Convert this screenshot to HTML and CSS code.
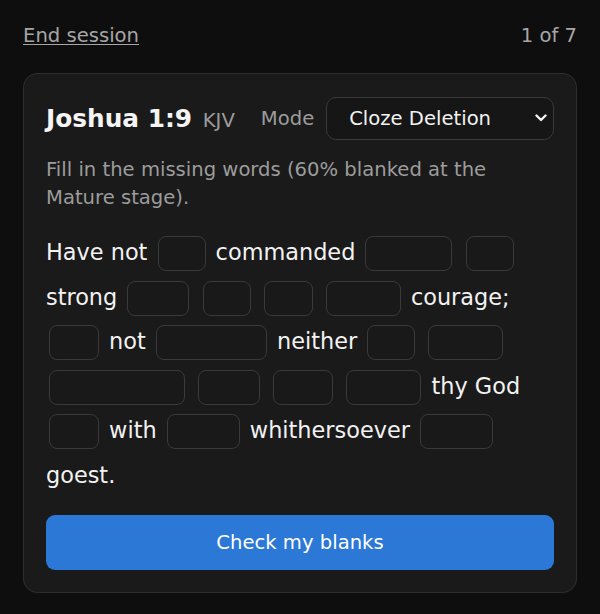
FILE: index.html
```html
<!DOCTYPE html>
<html lang="en">
<head>
<meta charset="utf-8">
<title>Cloze review</title>
<link rel="stylesheet" href="styles.css">
</head>
<body>
<main class="page">
  <header class="topbar">
    <a class="end-link" href="#">End session</a>
    <span class="progress">1 of 7</span>
  </header>

  <section class="card">
    <div class="card-head">
      <h2 class="ref">Joshua 1:9 <span class="version">KJV</span></h2>
      <label class="mode">
        <span class="mode-label">Mode</span>
        <span class="select-wrap">
          <select class="mode-select">
            <option>Cloze Deletion</option>
            <option>First Letters</option>
            <option>Full Recall</option>
          </select>
          <svg class="chevron" width="12" height="8" viewBox="0 0 12 8" aria-hidden="true"><path d="M1.5 1.5 L6 6 L10.5 1.5" fill="none" stroke="#f2f2f2" stroke-width="2.4" stroke-linecap="round" stroke-linejoin="round"/></svg>
        </span>
      </label>
    </div>

    <p class="hint">Fill in the missing words (60% blanked at the Mature stage).</p>

    <p class="verse">Have not <input class="blank" style="width:48px" aria-label="blank 1"> commanded <input class="blank" style="width:87px" aria-label="blank 2"> <input class="blank" style="width:48px" aria-label="blank 3"> strong <input class="blank" style="width:62px" aria-label="blank 4"> <input class="blank" style="width:48px" aria-label="blank 5"> <input class="blank" style="width:49px" aria-label="blank 6"> <input class="blank" style="width:75px" aria-label="blank 7"> courage; <input class="blank" style="width:50px" aria-label="blank 8"> not <input class="blank" style="width:111px" aria-label="blank 9"> neither <input class="blank" style="width:48px" aria-label="blank 10"> <input class="blank" style="width:75px" aria-label="blank 11"> <input class="blank" style="width:136px" aria-label="blank 12"> <input class="blank" style="width:62px" aria-label="blank 13"> <input class="blank" style="width:60px" aria-label="blank 14"> <input class="blank" style="width:75px" aria-label="blank 15"> thy God <input class="blank" style="width:50px" aria-label="blank 16"> with <input class="blank" style="width:73px" aria-label="blank 17"> whithersoever <input class="blank" style="width:73px" aria-label="blank 18"> goest.</p>

    <button class="check-btn" type="button">Check my blanks</button>
  </section>
</main>
</body>
</html>
```

FILE: styles.css
```css
* { box-sizing: border-box; }

html, body {
  margin: 0;
  background: #0e0e0e;
}

body {
  font-family: "DejaVu Sans", "Liberation Sans", sans-serif;
  color: #f0f0f0;
}

.page {
  padding: 24px 23px 0;
}

.topbar {
  display: flex;
  justify-content: space-between;
  align-items: baseline;
  font-size: 19.6px;
  line-height: normal;
  margin-bottom: 26px;
}

.end-link {
  color: #a6a6a6;
  text-decoration: underline;
  text-underline-offset: 2px;
}

.progress {
  color: #a6a6a6;
}

.card {
  background: #1a1a1a;
  border: 1px solid #2e2e2e;
  border-radius: 14px;
  padding: 23px 22px 22px;
}

.card-head {
  display: flex;
  align-items: center;
}

.ref {
  margin: 0;
  font-size: 24.8px;
  font-weight: 700;
  color: #f5f5f5;
  white-space: nowrap;
}

.version {
  font-size: 19.6px;
  font-weight: 400;
  color: #9c9c9c;
  margin-left: 2px;
}

.mode {
  flex: 1;
  display: flex;
  align-items: center;
  gap: 12px;
  margin-left: 26px;
}

.mode-label {
  font-size: 19.6px;
  color: #9c9c9c;
}

.select-wrap {
  position: relative;
  flex: 1;
  display: flex;
}

.mode-select {
  appearance: none;
  -webkit-appearance: none;
  width: 100%;
  height: 43px;
  padding: 0 36px 0 22px;
  background: #161616;
  color: #f2f2f2;
  border: 1px solid #3a3a3a;
  border-radius: 10px;
  font-family: inherit;
  font-size: 19.6px;
}

.chevron {
  position: absolute;
  right: 7px;
  top: 17px;
  pointer-events: none;
}

.hint {
  margin: 16px 0 0;
  font-size: 19.6px;
  line-height: 28px;
  color: #9c9c9c;
}

.verse {
  margin: 18px 0 0;
  font-size: 22.4px;
  line-height: 44.6px;
  color: #f2f2f2;
}

.blank {
  display: inline-block;
  height: 35px;
  margin: 0 3px;
  padding: 0 8px;
  vertical-align: middle;
  background: #191919;
  border: 1px solid #3a3a3a;
  border-radius: 8px;
  color: #f2f2f2;
  font-family: inherit;
  font-size: 19.2px;
}

.check-btn {
  display: block;
  width: 100%;
  height: 55px;
  margin-top: 17px;
  background: #2b78d6;
  color: #ffffff;
  border: 0;
  border-radius: 9px;
  font-family: inherit;
  font-size: 19.6px;
}
```
